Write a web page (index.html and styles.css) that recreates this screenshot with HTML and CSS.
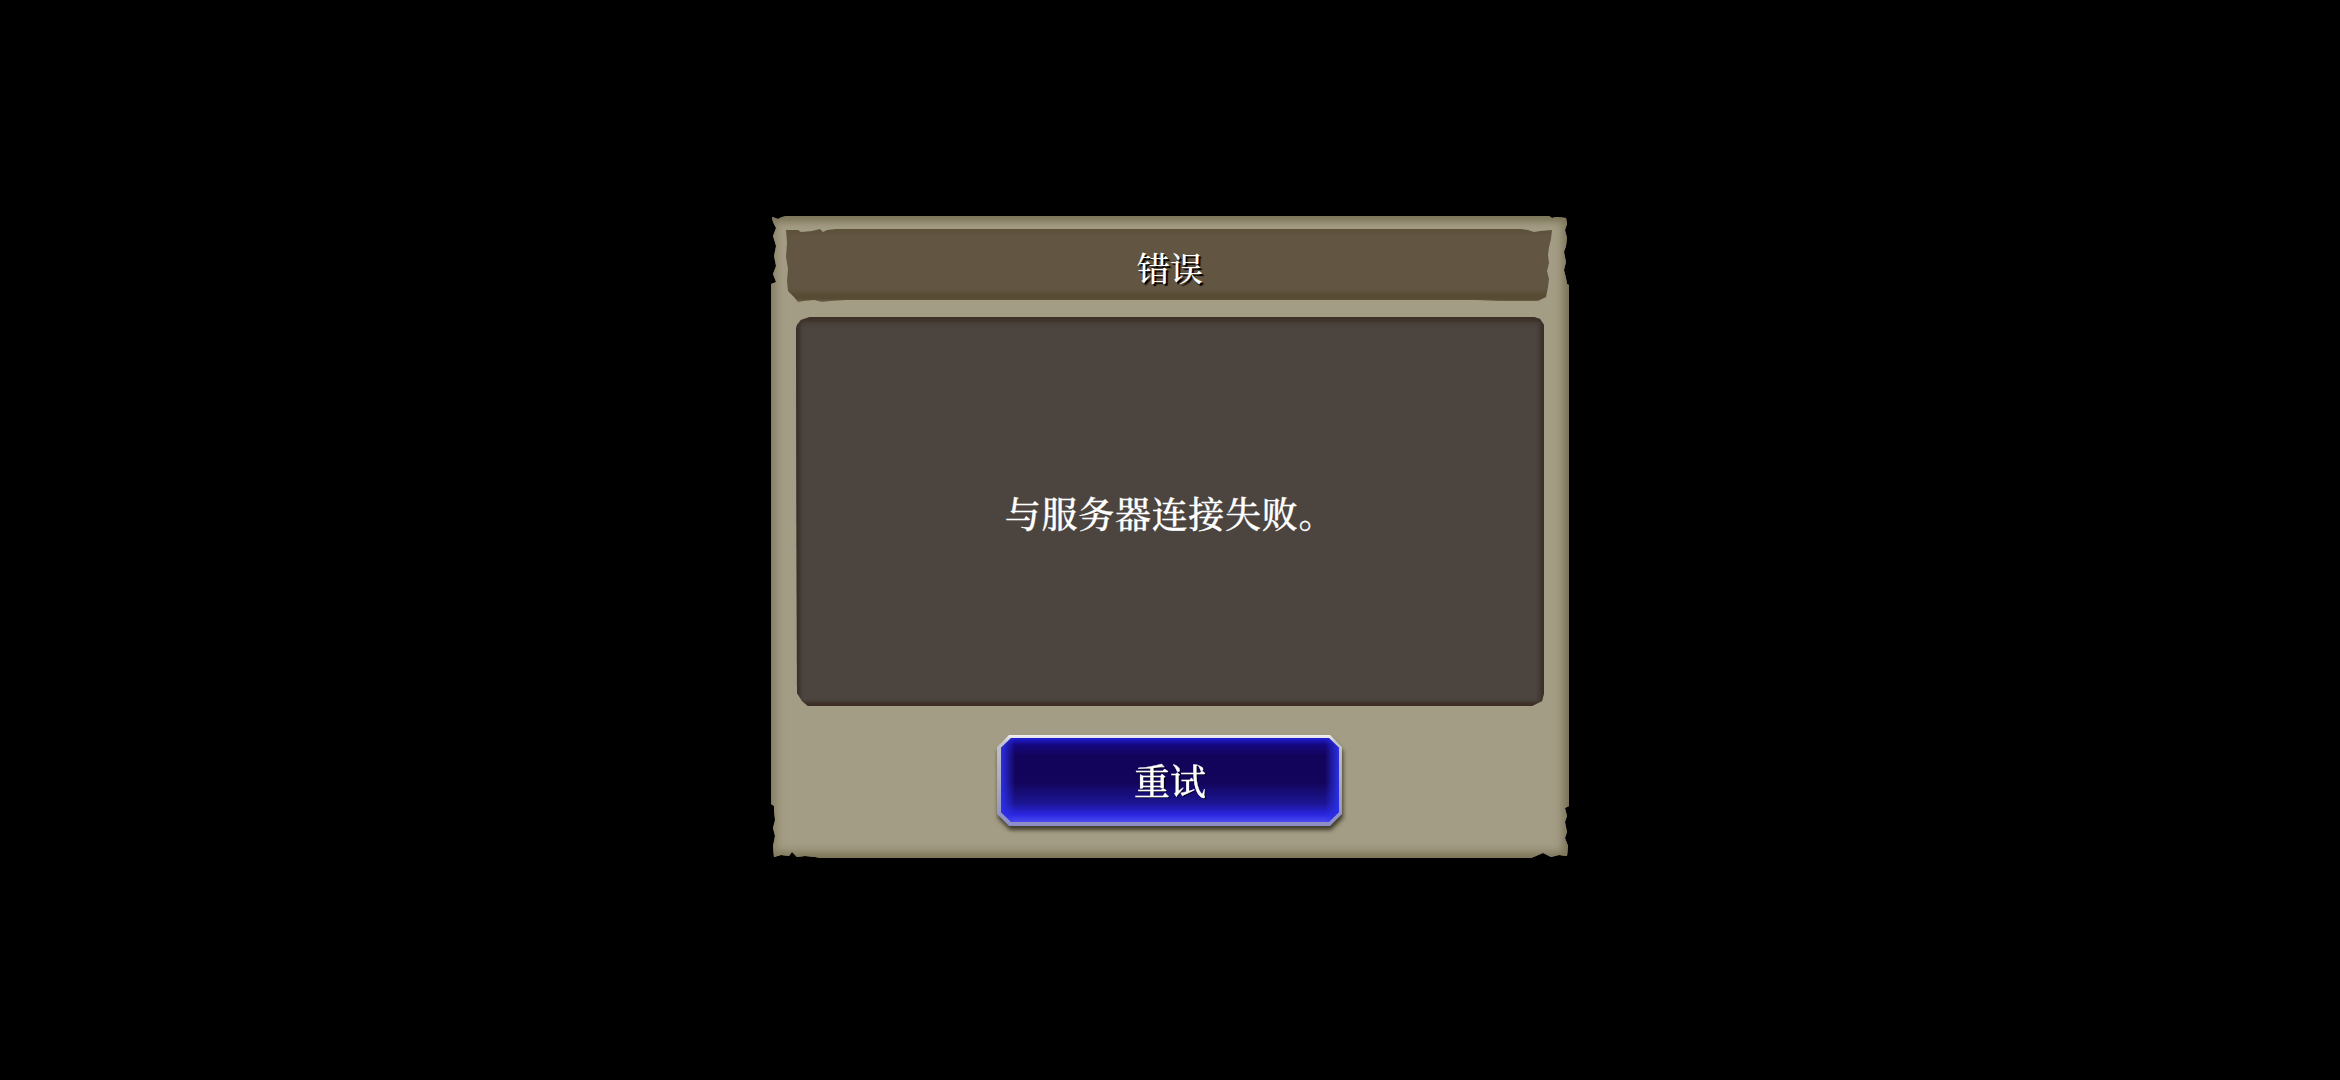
FILE: index.html
```html
<!DOCTYPE html>
<html lang="zh-CN">
<head>
<meta charset="utf-8">
<title>错误</title>
<link rel="stylesheet" href="styles.css">
</head>
<body>
<main class="dialog">
  <h1 class="title">错误</h1>
  <div class="message"><p>与服务器连接失败。</p></div>
  <div class="actions">
    <div class="btn-shadow">
      <div class="btn-edge">
        <button class="btn" type="button">重试</button>
      </div>
    </div>
  </div>
</main>
</body>
</html>
```
FILE: styles.css
```css
* { box-sizing: border-box; margin: 0; padding: 0; }
html, body { width: 100%; height: 100%; background: #000; overflow: hidden; }
body {
  display: flex; align-items: flex-start; justify-content: center;
  padding-top: 216px;
  font-family: "Noto Serif CJK SC", "Noto Sans CJK SC", serif;
  color: #fff;
}
.dialog {
  width: 798px; height: 642px;
  padding: 13px 17px 0 15px;
  display: flex; flex-direction: column;
  background: #a49d85;
  box-shadow: inset 0 13px 7px -7px #7d7659, inset 11px 0 9px -6px #857e63, inset -12px 0 9px -6px #7a7358, inset 0 -13px 8px -7px #7d7659;
  clip-path: polygon(1px 1px, 7px 3px, 11px 1px, 16px 0, 778px 0, 781px 2px, 785px 1px, 795px 2px, 796px 8px, 794px 14px, 796px 22px, 795px 30px, 793px 36px, 795px 46px, 793px 54px, 795px 62px, 796px 68px, 798px 69px, 798px 590px, 794px 592px, 796px 600px, 794px 606px, 796px 616px, 794px 622px, 797px 630px, 796px 640px, 788px 639px, 780px 641px, 772px 637px, 765px 640px, 760px 642px, 50px 642px, 44px 641px, 34px 640px, 26px 641px, 21px 636px, 18px 640px, 10px 639px, 3px 641px, 2px 630px, 4px 620px, 2px 612px, 4px 604px, 3px 595px, 3px 590px, 0 588px, 0 68px, 5px 66px, 2px 58px, 5px 50px, 3px 40px, 5px 30px, 2px 20px, 5px 12px, 2px 6px);
}
.title {
  height: 74px; flex: none;
  display: flex; align-items: center; justify-content: center;
  padding: 1px 0 0 2px;
  font-size: 33px; font-weight: 500; line-height: 1;
  text-shadow: 2px 2px 1px #000;
  background: linear-gradient(#5c5039 0, #625541 7px, #625541 60px, #574b33 66px, #574b33 70px, #6a5d49 72px);
  clip-path: polygon(0 1px, 4px 1px, 12px 1px, 15px 3px, 26px 2px, 34px 0, 37px 3px, 41px 1px, 50px 0, 735px 0, 742px 1px, 748px 3px, 754px 2px, 766px 1px, 765px 10px, 763px 18px, 762px 26px, 763px 34px, 761px 42px, 763px 50px, 762px 58px, 760px 68px, 752px 72px, 730px 72px, 712px 72px, 690px 71px, 60px 71px, 44px 72px, 36px 73px, 28px 71px, 18px 72px, 12px 73px, 8px 68px, 2px 62px, 1px 52px, 2px 40px, 0 28px, 1px 14px);
}
.message {
  flex: none;
  height: 389px;
  margin: 14px 8px 0 10px;
  display: flex; align-items: center; justify-content: center;
  background: #4b443f;
  box-shadow: inset 0 8px 5px -3px #3e2f26, inset 0 -7px 3px -3px #3e2f26, inset 7px 0 4px -3px #3a302a, inset -7px 0 4px -3px #3a302a;
  clip-path: polygon(1px 8px, 5px 3px, 14px 0, 738px 0, 744px 2px, 748px 8px, 748px 376px, 746px 384px, 736px 389px, 12px 389px, 6px 384px, 1px 376px, 0 12px);
}
.message p {
  font-size: 36px; font-weight: 500; line-height: 1; letter-spacing: 0.7px;
  padding-top: 3px;
  -webkit-text-stroke: 0.3px #fff;
}
.actions {
  flex: none;
  margin-top: 29px;
  display: flex; justify-content: center;
  padding-right: 0;
  padding-left: 1px;
}
.btn-shadow {
  filter: drop-shadow(1px 4px 2px rgba(45,40,26,.85));
}
.btn-edge {
  width: 345px; height: 91px;
  padding: 3px 3px 4px 4px;
  background: linear-gradient(#f4f2f2 0, #c2c2cc 8%, #a9a9c4 55%, #8c8dc6 100%);
  clip-path: polygon(12px 0, 333px 0, 345px 12px, 345px 79px, 333px 91px, 12px 91px, 0 79px, 0 12px);
}
.btn {
  display: block; width: 100%; height: 100%;
  border: 0; color: #fff;
  font: inherit; font-size: 36px; font-weight: 500; line-height: 1;
  -webkit-text-stroke: 0.3px #fff;
  text-shadow: 1px 1px 1px #000;
  background:
    linear-gradient(90deg, #2b30e6 0, rgba(34,30,190,0) 14px, rgba(34,30,190,0) calc(100% - 14px), #2b30e6 100%),
    linear-gradient(#1f21d6 0, #15077e 7px, #12045a 18px, #12045a 52%, #1c1594 78%, #2a25e0 91%, #4a4af0 100%);
  clip-path: polygon(10px 0, calc(100% - 10px) 0, 100% 10px, 100% calc(100% - 10px), calc(100% - 10px) 100%, 10px 100%, 0 calc(100% - 10px), 0 10px);
}
```
